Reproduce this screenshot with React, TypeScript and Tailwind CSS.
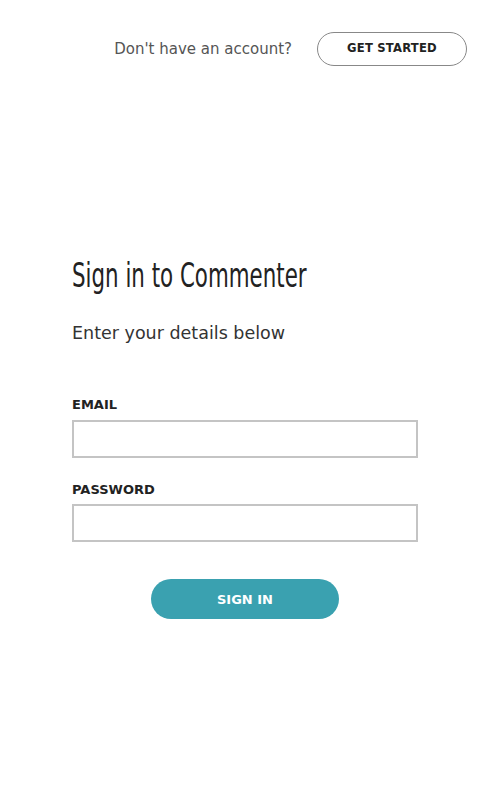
import React from "react";

export default function App() {
  const sans = { fontFamily: '"DejaVu Sans", "Open Sans", sans-serif' };
  return (
    <div className="min-h-[792px] w-full bg-white" style={sans}>
      <div className="flex items-center justify-end gap-[25px] pr-[20px] pt-[32px]">
        <span className="text-[15px] text-[#555]">Don't have an account?</span>
        <button className="flex h-[34px] w-[150px] items-center justify-center rounded-full border border-[#888] text-[11.6px] font-bold tracking-[0.2px] text-[#222]">
          GET STARTED
        </button>
      </div>
      <div className="pl-[72px] pt-[190px]">
        <h1
          className="origin-left scale-x-[0.72] whitespace-nowrap text-[33px] leading-[40px] font-normal text-[#222]"
          style={{ fontFamily: '"DejaVu Sans Condensed", "DejaVu Sans", sans-serif' }}
        >
          Sign in to Commenter
        </h1>
        <p className="mt-[24px] text-[17.5px] text-[#333]">Enter your details below</p>
        <form className="mt-[49px] w-[346px]" onSubmit={(e) => e.preventDefault()}>
          <label className="block text-[13px] font-bold text-[#222]">EMAIL</label>
          <input type="email" className="mt-[5px] block h-[38px] w-full border-2 border-[#c4c4c4] outline-none" />
          <label className="mt-[22px] block text-[13px] font-bold text-[#222]">PASSWORD</label>
          <input type="password" className="mt-[5px] block h-[38px] w-full border-2 border-[#c4c4c4] outline-none" />
          <div className="mt-[37px] flex justify-center">
            <button className="h-[40px] w-[188px] rounded-full bg-[#3aa1b0] text-[13px] font-bold text-white">
              SIGN IN
            </button>
          </div>
        </form>
      </div>
    </div>
  );
}
